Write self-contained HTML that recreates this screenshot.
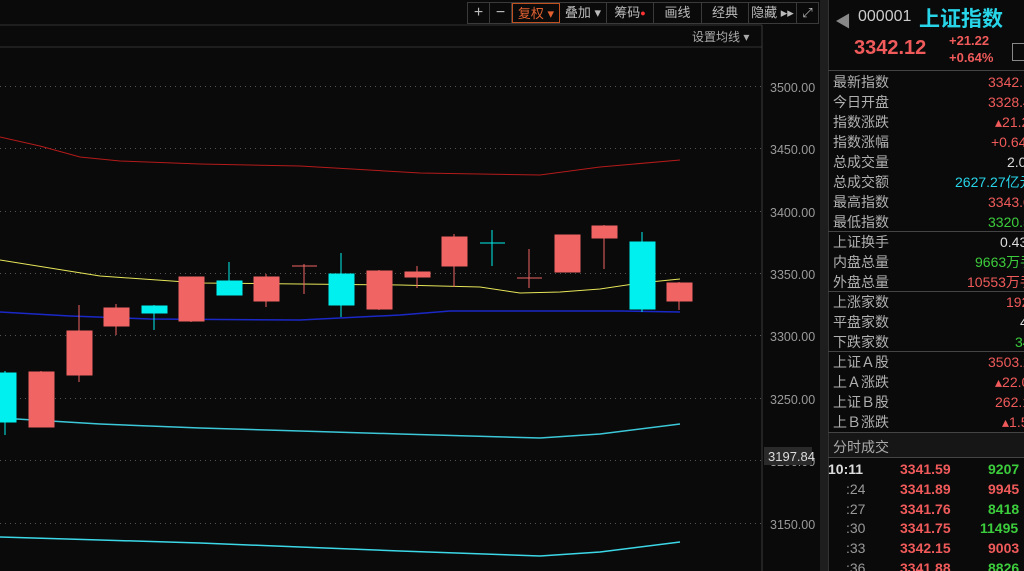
<!DOCTYPE html>
<html style="overflow:hidden"><head><meta charset="utf-8"><style>
*{margin:0;padding:0;box-sizing:border-box}
body{width:1024px;height:571px;background:#0a0a0a;overflow:hidden;position:relative;font-family:"Liberation Sans","Noto Sans CJK SC",sans-serif;color:#aaa}
.abs{position:absolute}
.tb{position:absolute;top:2px;height:22px;border:1px solid #3a3a3a;display:flex;left:467px}
.tb div{border-right:1px solid #3a3a3a;font-size:13px;line-height:20px;color:#bbb;text-align:center}
.rp{position:absolute;left:828px;top:0;width:196px;height:571px;overflow:hidden}
.row{position:absolute;left:5px;width:191px;font-size:14px;height:20px;line-height:20px;color:#b0b0b0}
.row span{position:absolute;left:0}
.row b{position:absolute;font-weight:normal;white-space:nowrap}
.r{color:#f05a5a}.g{color:#3ccd3c}.c{color:#27d4e8}.w{color:#ddd}
.hl{position:absolute;left:828px;width:196px;height:1px;background:#444}
.tr{position:absolute;left:828px;width:196px;height:20px;font-size:14px;font-weight:bold;line-height:20px;overflow:hidden}
.tr span{position:absolute;white-space:nowrap}
</style></head><body>
<svg class="abs" style="left:0;top:0" width="820" height="571">
<line x1="0" y1="25" x2="762" y2="25" stroke="#333"/>
<line x1="0" y1="47" x2="762" y2="47" stroke="#333"/>
<line x1="762" y1="25" x2="762" y2="571" stroke="#3a3a3a"/>
<g stroke="#555" stroke-dasharray="1,4">
<line x1="0" y1="86.5" x2="762" y2="86.5"/><line x1="0" y1="148.5" x2="762" y2="148.5"/><line x1="0" y1="211.5" x2="762" y2="211.5"/><line x1="0" y1="273.5" x2="762" y2="273.5"/><line x1="0" y1="335.5" x2="762" y2="335.5"/><line x1="0" y1="398.5" x2="762" y2="398.5"/><line x1="0" y1="460.5" x2="762" y2="460.5"/><line x1="0" y1="523.5" x2="762" y2="523.5"/>
</g>
<g font-size="12.5" fill="#9a9a9a" font-family="Liberation Sans">
<text x="770" y="92">3500.00</text><text x="770" y="154">3450.00</text><text x="770" y="217">3400.00</text><text x="770" y="279">3350.00</text><text x="770" y="341">3300.00</text><text x="770" y="404">3250.00</text><text x="770" y="466">3200.00</text><text x="770" y="529">3150.00</text>
</g>
<rect x="764" y="447" width="48" height="18" fill="#2a2a2a"/>
<text x="768" y="461" font-size="13" fill="#ddd" font-family="Liberation Sans">3197.84</text>
<text x="692" y="41" font-size="12" fill="#aaa" font-family="Liberation Sans,Noto Sans CJK SC">设置均线 ▾</text>
<polyline fill="none" stroke="#b51a1a" points="0,137 40,146 80,157 120,161 200,164 300,166 420,173 540,175 600,167 680,160"/>
<polyline fill="none" stroke="#e6e65a" points="0,260 50,268 100,276 200,283 300,284 400,285 480,287 520,293 560,292 600,289 640,283 680,279"/>
<polyline fill="none" stroke="#1a28c8" stroke-width="1.5" points="0,312 70,316 150,319 300,320 400,315 450,311 580,311 620,311 680,312"/>
<polyline fill="none" stroke="#3cc8d8" stroke-width="1.5" points="0,418 50,421 100,424 200,428 300,431 400,434 540,438 600,434 680,424"/>
<polyline fill="none" stroke="#3cd8e8" stroke-width="1.5" points="0,537 100,540 200,543 300,547 400,551 540,556 600,552 680,542"/>
<g stroke="#f06464" fill="#f06464">
<line x1="41" y1="371" x2="41" y2="427"/><rect x="29" y="372" width="25" height="55"/>
<line x1="79" y1="305" x2="79" y2="382"/><rect x="67" y="331" width="25" height="44"/>
<line x1="116" y1="304" x2="116" y2="335"/><rect x="104" y="308" width="25" height="18"/>
<line x1="191" y1="277" x2="191" y2="322"/><rect x="179" y="277" width="25" height="44"/>
<line x1="266" y1="274" x2="266" y2="307"/><rect x="254" y="277" width="25" height="24"/>
<line x1="304" y1="264" x2="304" y2="294"/><line x1="292" y1="266" x2="317" y2="266"/>
<line x1="379" y1="270" x2="379" y2="310"/><rect x="367" y="271" width="25" height="38"/>
<line x1="417" y1="266" x2="417" y2="288"/><rect x="405" y="272" width="25" height="5"/>
<line x1="454" y1="234" x2="454" y2="287"/><rect x="442" y="237" width="25" height="29"/>
<line x1="529" y1="249" x2="529" y2="288"/><line x1="517" y1="278" x2="542" y2="278"/>
<rect x="555" y="235" width="25" height="37"/>
<line x1="604" y1="225" x2="604" y2="269"/><rect x="592" y="226" width="25" height="12"/>
<line x1="679" y1="282" x2="679" y2="310"/><rect x="667" y="283" width="25" height="18"/>
</g>
<g stroke="#00f0f0" fill="#00f0f0">
<line x1="5" y1="371" x2="5" y2="435"/><rect x="-10" y="373" width="26" height="49"/>
<line x1="154" y1="305" x2="154" y2="330"/><rect x="142" y="306" width="25" height="7"/>
<line x1="229" y1="262" x2="229" y2="295"/><rect x="217" y="281" width="25" height="14"/>
<line x1="341" y1="253" x2="341" y2="317"/><rect x="329" y="274" width="25" height="31"/>
<line x1="492" y1="230" x2="492" y2="266"/><line x1="480" y1="243" x2="505" y2="243"/>
<line x1="642" y1="232" x2="642" y2="312"/><rect x="630" y="242" width="25" height="67"/>
</g>
</svg>
<div class="tb"><div style="width:22px;font-size:16px">+</div><div style="width:22px;font-size:16px">−</div><div style="width:48px;color:#e06030;border:1px solid #c05020">复权 ▾</div><div style="width:47px">叠加 ▾</div><div style="width:47px">筹码<span style="color:#f33;font-size:9px;vertical-align:top">●</span></div><div style="width:48px">画线</div><div style="width:47px">经典</div><div style="width:48px">隐藏 ▸▸</div><div style="width:21px;border:none">⤢</div></div>
<div class="abs" style="left:820px;top:0;width:8px;height:571px;background:#1e1e1e"></div>
<div class="abs" style="left:828px;top:0;width:1px;height:571px;background:#333"></div>
<div class="abs" style="left:835px;top:8px;font-size:16px;color:#888">◀</div>
<div class="abs" style="left:858px;top:8px;font-size:16px;color:#ccc">000001</div>
<div class="abs" style="left:919px;top:3px;font-size:21px;color:#27d4e8;font-weight:bold">上证指数</div>
<div class="abs" style="left:854px;top:37px;font-size:20px;color:#f05a5a;font-weight:bold">3342.12</div>
<div class="abs" style="left:949px;top:33px;font-size:13px;color:#f05a5a;font-weight:bold">+21.22</div>
<div class="abs" style="left:949px;top:50px;font-size:13px;color:#f05a5a;font-weight:bold">+0.64%</div>
<div class="abs" style="left:1012px;top:43px;width:14px;height:18px;border:1px solid #888"></div>
<div class="hl" style="top:70px"></div>
<div class="rp">
<div class="row" style="top:72px"><span>最新指数</span><b class="r" style="left:155px">3342.12</b></div>
<div class="row" style="top:92px"><span>今日开盘</span><b class="r" style="left:155px">3328.44</b></div>
<div class="row" style="top:112px"><span>指数涨跌</span><b class="r" style="left:162px">▴21.22</b></div>
<div class="row" style="top:132px"><span>指数涨幅</span><b class="r" style="left:158px">+0.64%</b></div>
<div class="row" style="top:152px"><span>总成交量</span><b class="w" style="left:174px">2.02亿手</b></div>
<div class="row" style="top:172px"><span>总成交额</span><b class="c" style="left:122px">2627.27亿元</b></div>
<div class="row" style="top:192px"><span>最高指数</span><b class="r" style="left:155px">3343.01</b></div>
<div class="row" style="top:212px"><span>最低指数</span><b class="g" style="left:155px">3320.51</b></div>
<div class="row" style="top:232px"><span>上证换手</span><b class="w" style="left:167px">0.43%</b></div>
<div class="row" style="top:252px"><span>内盘总量</span><b class="g" style="left:142px">9663万手</b></div>
<div class="row" style="top:272px"><span>外盘总量</span><b class="r" style="left:134px">10553万手</b></div>
<div class="row" style="top:292px"><span>上涨家数</span><b class="r" style="left:173px">1920</b></div>
<div class="row" style="top:312px"><span>平盘家数</span><b class="w" style="left:187px">4</b></div>
<div class="row" style="top:332px"><span>下跌家数</span><b class="g" style="left:182px">34</b></div>
<div class="row" style="top:352px"><span>上证Ａ股</span><b class="r" style="left:155px">3503.24</b></div>
<div class="row" style="top:372px"><span>上Ａ涨跌</span><b class="r" style="left:162px">▴22.01</b></div>
<div class="row" style="top:392px"><span>上证Ｂ股</span><b class="r" style="left:162px">262.13</b></div>
<div class="row" style="top:412px"><span>上Ｂ涨跌</span><b class="r" style="left:169px">▴1.52</b></div>
</div>
<div class="hl" style="top:231px"></div><div class="hl" style="top:291px"></div><div class="hl" style="top:351px"></div><div class="hl" style="top:432px"></div>
<div class="abs" style="left:829px;top:433px;width:195px;height:24px;background:#161616"></div>
<div class="abs" style="left:833px;top:437px;font-size:14px;color:#aaa">分时成交</div>
<div class="hl" style="top:457px"></div>
<div class="tr" style="top:459px"><span style="left:0;color:#ddd">10:11</span><span style="left:72px;color:#f05a5a">3341.59</span><span style="left:160px;color:#3ccd3c">9207</span></div>
<div class="tr" style="top:479px"><span style="left:18px;color:#999;font-weight:normal">:24</span><span style="left:72px;color:#f05a5a">3341.89</span><span style="left:160px;color:#f05a5a">9945</span></div>
<div class="tr" style="top:499px"><span style="left:18px;color:#999;font-weight:normal">:27</span><span style="left:72px;color:#f05a5a">3341.76</span><span style="left:160px;color:#3ccd3c">8418</span></div>
<div class="tr" style="top:518px"><span style="left:18px;color:#999;font-weight:normal">:30</span><span style="left:72px;color:#f05a5a">3341.75</span><span style="left:152px;color:#3ccd3c">11495</span></div>
<div class="tr" style="top:538px"><span style="left:18px;color:#999;font-weight:normal">:33</span><span style="left:72px;color:#f05a5a">3342.15</span><span style="left:160px;color:#f05a5a">9003</span></div>
<div class="tr" style="top:558px"><span style="left:18px;color:#999;font-weight:normal">:36</span><span style="left:72px;color:#f05a5a">3341.88</span><span style="left:160px;color:#3ccd3c">8826</span></div>
</body></html>
